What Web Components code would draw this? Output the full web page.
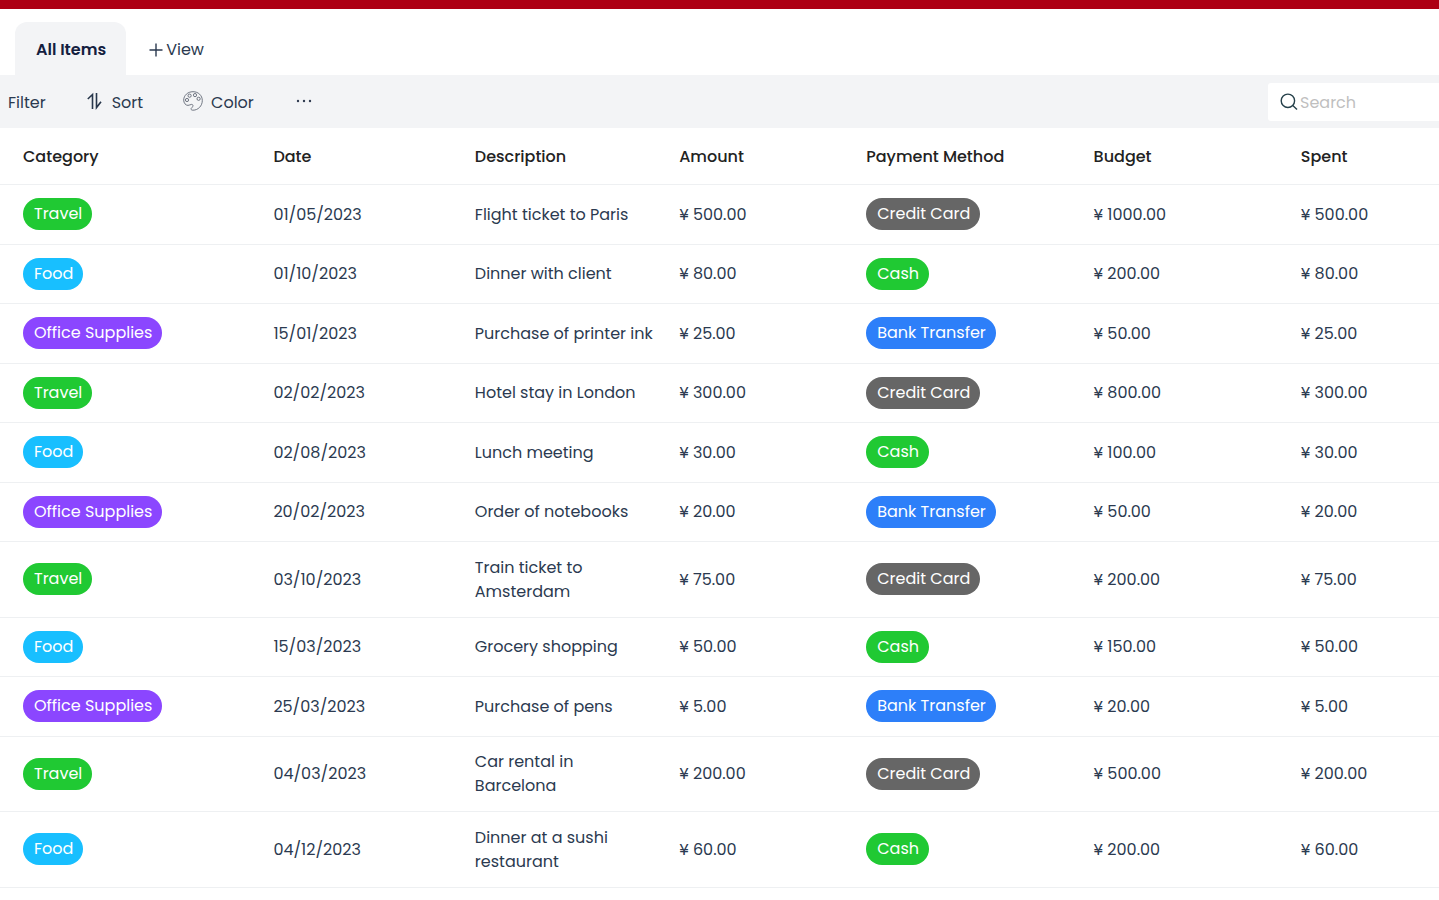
<!DOCTYPE html>
<html lang="en">
<head>
<meta charset="utf-8">
<meta name="viewport" content="width=device-width, initial-scale=1">
<title>All Items</title>
<style>
  html { background: #fff; }
  body { margin: 0; font: 400 16px/24px Poppins, Inter, sans-serif; color: #2b3a50; overflow-x: hidden; }
</style>
</head>
<body>
<expense-page></expense-page>

<script>
const define = (name, html, setup) => {
  const template = document.createElement('template');
  template.innerHTML = html;
  customElements.define(name, class extends HTMLElement {
    constructor() {
      super();
      this.attachShadow({ mode: 'open' }).append(template.content.cloneNode(true));
      if (setup) setup(this.shadowRoot);
    }
  });
};

define('tag-pill', `
  <style>
    :host { display: inline-block; vertical-align: middle; height: 32px; padding: 0 10px 0 11px; border-radius: 16px;
      box-sizing: border-box; line-height: 32px; color: #fff; white-space: nowrap; background: #666; }
    :host([tone="green"]) { background: #20c933; }
    :host([tone="cyan"]) { background: #18bfff; }
    :host([tone="purple"]) { background: #8b46ff; }
    :host([tone="blue"]) { background: #2d7ff9; }
  </style>
  <slot></slot>`);

define('view-tabs', `
  <style>
    :host { display: flex; padding: 13px 15px 0; }
    button { border: 0; background: none; font: inherit; color: inherit; height: 53px; box-sizing: border-box;
      display: flex; align-items: center; gap: 3px; padding: 2px 23px 0; }
    .active { background: #f3f4f6; border-radius: 12px 12px 0 0; font-weight: 600; color: #14203f; padding: 2px 20px 0 21px; }
    svg { display: block; }
  </style>
  <button class="active" type="button">All Items</button>
  <button type="button">
    <svg width="14" height="14" viewBox="0 0 14 14" fill="none" stroke="currentColor" stroke-width="1.4" aria-hidden="true"><path d="M7 .5v13M.5 7h13"/></svg>
    View
  </button>`);

define('tool-button', `
  <style>
    :host { display: block; }
    button { display: flex; align-items: center; gap: 8px; border: 0; padding: 0; background: none; font: inherit; color: inherit; }
    ::slotted(svg) { display: block; margin-bottom: 3px; }
  </style>
  <button type="button"><slot name="icon"></slot><slot></slot></button>`);

define('search-box', `
  <style>
    :host { display: flex; align-items: center; gap: 2px; width: 171px; height: 38px; box-sizing: border-box;
      padding-left: 12px; background: #fff; border-radius: 3px 0 0 3px; }
    label { display: block; }
    svg { display: block; }
    input { flex: 1; min-width: 0; border: 0; outline: 0; padding: 2px 0 0; background: none; font: inherit; color: inherit; }
    input::placeholder { color: #bfbfbf; opacity: 1; }
  </style>
  <label for="q" aria-label="Search">
    <svg width="18" height="18" viewBox="0 0 18 18" fill="none" stroke="#25404a" stroke-width="1.4" aria-hidden="true"><circle cx="7.9" cy="7.8" r="6.7"/><path d="m12.8 12.6 4.2 4"/></svg>
  </label>
  <input id="q" type="search" placeholder="Search">`);

define('tool-bar', `
  <style>
    :host { display: flex; align-items: center; justify-content: space-between; height: 53px; background: #f3f4f6; }
    .tools { display: flex; align-items: center; gap: 40px; padding: 2px 0 0 8px; }
  </style>
  <div class="tools">
    <tool-button>Filter</tool-button>
    <tool-button>
      <svg slot="icon" width="18" height="18" viewBox="0 0 18 18" fill="none" stroke="#27364b" stroke-width="1.6" aria-hidden="true"><path d="M6.500 17V2.500L1.800 7M10.500 1v14.600L15 9.800"/></svg>
      Sort
    </tool-button>
    <tool-button>
      <svg slot="icon" width="20" height="20" viewBox="0 0 20 20" fill="none" stroke="#626976" stroke-width=".9" aria-hidden="true">
        <path d="M10 .7C4.800.7.7 4.400.7 9.100c0 2.900 1.900 5.300 4.300 5.300 1.500 0 2.300-1 3.600-1 1.300 0 1.700 1 1.100 2.200-.7 1.300-1.700 1.500-1.700 2.400 0 .8.900 1.200 2 1.200 5.100 0 9.300-4.300 9.300-9.700C19.300 4.400 15.200.7 10 .7Z"/>
        <circle cx="4" cy="9" r="1.600"/><circle cx="6.600" cy="4.700" r="1.600"/><circle cx="12" cy="4.100" r="1.600"/><circle cx="15.600" cy="7.800" r="1.600"/>
      </svg>
      Color
    </tool-button>
    <tool-button>
      <svg slot="icon" width="22" height="16" viewBox="0 0 22 16" fill="#303c50" role="img" aria-label="More"><circle cx="4" cy="8" r="1.2"/><circle cx="10" cy="8" r="1.2"/><circle cx="16" cy="8" r="1.2"/></svg>
    </tool-button>
  </div>
  <search-box></search-box>`);

const tones = {
  'Travel': 'green', 'Food': 'cyan', 'Office Supplies': 'purple',
  'Credit Card': 'gray', 'Cash': 'green', 'Bank Transfer': 'blue'
};
const rows = [
  ['Travel', '01/05/2023', 'Flight ticket to Paris', '500.00', 'Credit Card', '1000.00'],
  ['Food', '01/10/2023', 'Dinner with client', '80.00', 'Cash', '200.00'],
  ['Office Supplies', '15/01/2023', 'Purchase of printer ink', '25.00', 'Bank Transfer', '50.00'],
  ['Travel', '02/02/2023', 'Hotel stay in London', '300.00', 'Credit Card', '800.00'],
  ['Food', '02/08/2023', 'Lunch meeting', '30.00', 'Cash', '100.00'],
  ['Office Supplies', '20/02/2023', 'Order of notebooks', '20.00', 'Bank Transfer', '50.00'],
  ['Travel', '03/10/2023', 'Train ticket to\nAmsterdam', '75.00', 'Credit Card', '200.00'],
  ['Food', '15/03/2023', 'Grocery shopping', '50.00', 'Cash', '150.00'],
  ['Office Supplies', '25/03/2023', 'Purchase of pens', '5.00', 'Bank Transfer', '20.00'],
  ['Travel', '04/03/2023', 'Car rental in\nBarcelona', '200.00', 'Credit Card', '500.00'],
  ['Food', '04/12/2023', 'Dinner at a sushi\nrestaurant', '60.00', 'Cash', '200.00']
];

define('expense-table', `
  <style>
    :host { display: block; }
    table { width: 100%; table-layout: fixed; border-collapse: separate; border-spacing: 0; }
    th, td { text-align: left; vertical-align: middle; border-bottom: 1px solid #eef0f2; padding: 13px 0 13px 23px; }
    th { font-weight: 500; color: #222; padding: 17px 0 15px 23px; }
    td { height: 32px; white-space: pre-line; }
    tr:nth-child(odd) td { padding-top: 14px; }
    tr:nth-child(odd) td.tag { padding-top: 13px; padding-bottom: 14px; }
    td.tag { line-height: 0; }
  </style>
  <table>
    <colgroup>
      <col style="width:17.4%"><col style="width:14%"><col style="width:14.2%"><col style="width:13%">
      <col style="width:15.8%"><col style="width:14.4%"><col>
    </colgroup>
    <thead><tr>
      <th scope="col">Category</th><th scope="col">Date</th><th scope="col">Description</th><th scope="col">Amount</th>
      <th scope="col">Payment Method</th><th scope="col">Budget</th><th scope="col">Spent</th>
    </tr></thead>
    <tbody></tbody>
  </table>`, root => {
  const tag = name => `<td class="tag"><tag-pill tone="${tones[name]}">${name}</tag-pill></td>`;
  root.querySelector('tbody').innerHTML = rows.map(([category, date, text, amount, method, budget]) =>
    `<tr>${tag(category)}<td>${date}</td><td>${text}</td><td>¥ ${amount}</td>${tag(method)}<td>¥ ${budget}</td><td>¥ ${amount}</td></tr>`
  ).join('');
});

define('expense-page', `
  <style>
    :host { display: block; border-top: 9px solid #ad0014; }
  </style>
  <view-tabs></view-tabs>
  <tool-bar></tool-bar>
  <expense-table></expense-table>`);
</script>
</body>
</html>
